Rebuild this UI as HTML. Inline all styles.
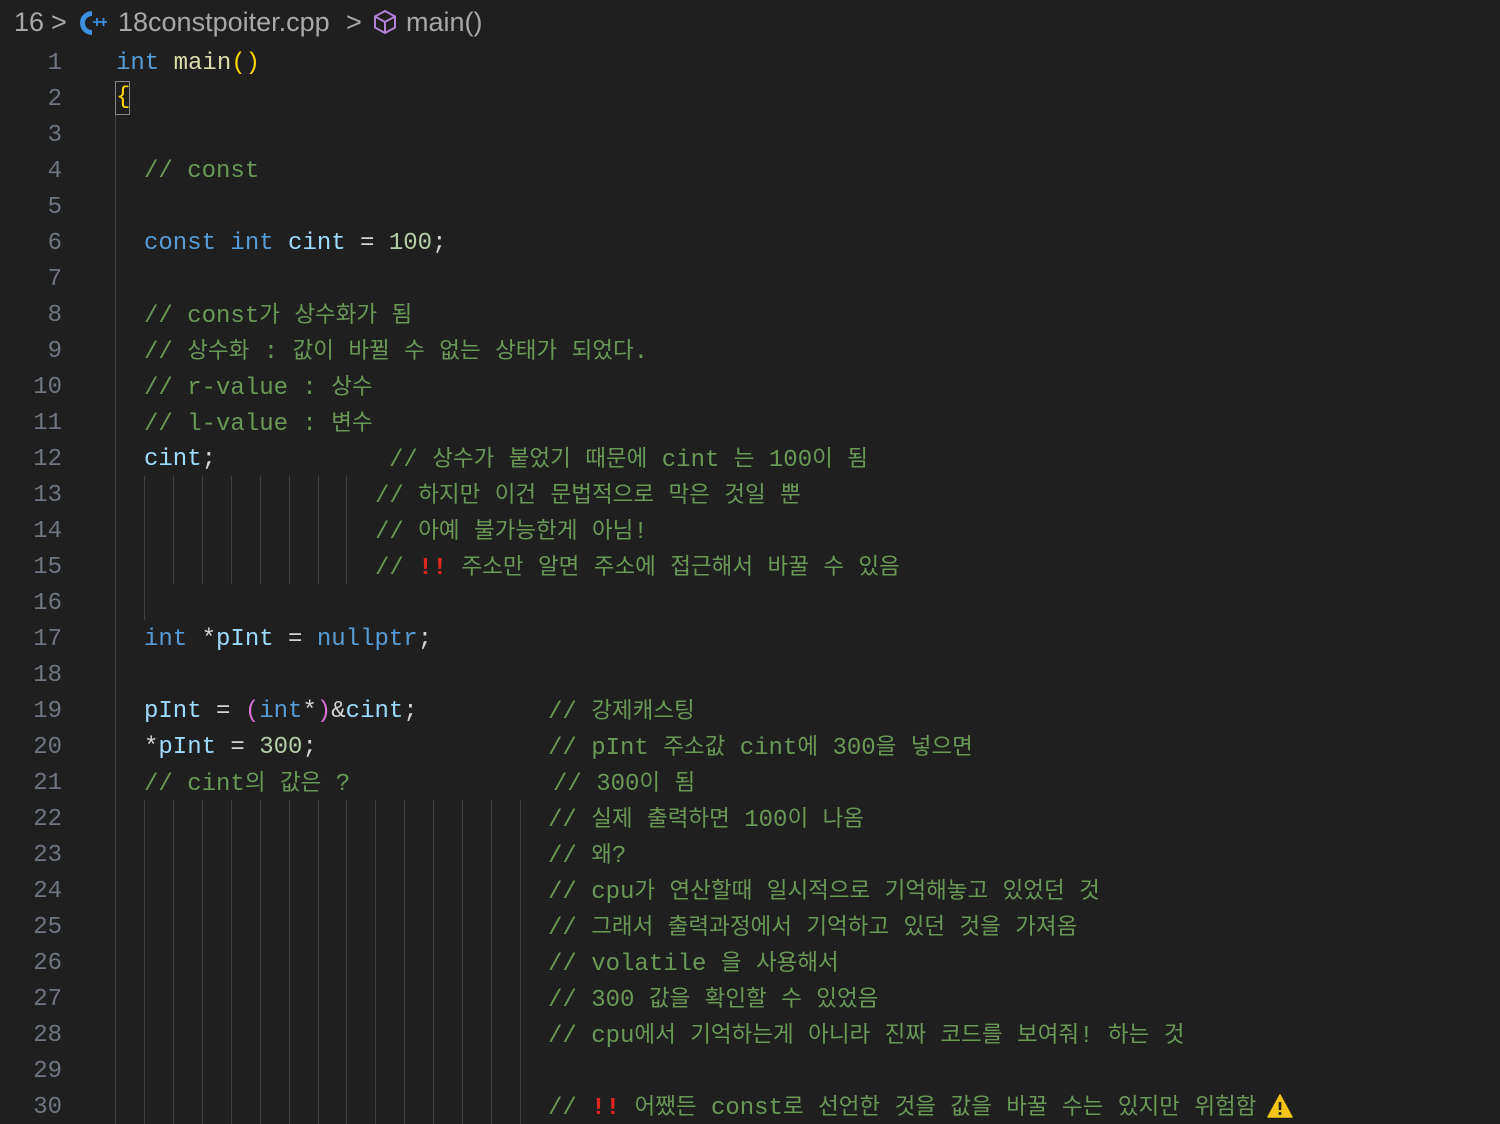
<!DOCTYPE html>
<html><head><meta charset="utf-8"><style>
html,body{margin:0;padding:0;background:#1f1f1f;width:1500px;height:1124px;overflow:hidden}
body{position:relative;font-family:"Liberation Mono","Noto Sans CJK KR",monospace;font-size:24px;color:#d4d4d4}
i{font-style:normal;font-size:22.5px}
.l{position:absolute;left:0;height:36px;line-height:36px;width:1500px;white-space:pre}
.n{position:absolute;right:1438px;color:#6e7681;text-align:right}
.s{position:absolute}
.c{color:#6a9955}.k{color:#569cd6}.f{color:#dcdcaa}.v{color:#9cdcfe}.m{color:#b5cea8}.y{color:#ffd700}.p{color:#da70d6}
.r{color:#e2261d;font-weight:bold}
.g{position:absolute;width:1px;background:#404040}
.bc{position:absolute;top:0;height:44px;line-height:44px;font-family:"Liberation Sans",sans-serif;font-size:27px;color:#a8a8a8;white-space:pre}
</style></head><body>
<div class="bc" style="left:14px">16</div>
<div class="bc" style="left:51px">&gt;</div>
<svg style="position:absolute;left:76px;top:9px" width="32" height="28" viewBox="0 0 32 28"><path d="M16 4.5 A9.5 9.5 0 1 0 16 23.5" fill="none" stroke="#3b8ee0" stroke-width="5"/><path d="M17 13h8M21 9v8M24 13h7M27.5 9v8" stroke="#3b8ee0" stroke-width="1.8"/></svg>
<div class="bc" style="left:118px">18constpoiter.cpp</div>
<div class="bc" style="left:346px">&gt;</div>
<svg style="position:absolute;left:372px;top:9px" width="26" height="26" viewBox="0 0 26 26" fill="none" stroke="#b180d7" stroke-width="2"><path d="M13 2L23 7.5V18.5L13 24L3 18.5V7.5Z M3 7.5L13 13L23 7.5 M13 13V24"/></svg>
<div class="bc" style="left:406px">main()</div>

<div class="g" style="left:115px;top:115px;height:1009px"></div>
<div class="g" style="left:144px;top:476px;height:144px"></div>
<div class="g" style="left:173px;top:476px;height:108px"></div><div class="g" style="left:202px;top:476px;height:108px"></div><div class="g" style="left:231px;top:476px;height:108px"></div><div class="g" style="left:260px;top:476px;height:108px"></div><div class="g" style="left:289px;top:476px;height:108px"></div><div class="g" style="left:318px;top:476px;height:108px"></div><div class="g" style="left:346px;top:476px;height:108px"></div>
<div class="g" style="left:144px;top:800px;height:324px"></div><div class="g" style="left:173px;top:800px;height:324px"></div><div class="g" style="left:202px;top:800px;height:324px"></div><div class="g" style="left:231px;top:800px;height:324px"></div><div class="g" style="left:260px;top:800px;height:324px"></div><div class="g" style="left:289px;top:800px;height:324px"></div><div class="g" style="left:318px;top:800px;height:324px"></div><div class="g" style="left:346px;top:800px;height:324px"></div><div class="g" style="left:375px;top:800px;height:324px"></div><div class="g" style="left:404px;top:800px;height:324px"></div><div class="g" style="left:433px;top:800px;height:324px"></div><div class="g" style="left:462px;top:800px;height:324px"></div><div class="g" style="left:491px;top:800px;height:324px"></div><div class="g" style="left:520px;top:800px;height:324px"></div>

<div class="l" style="top:46px"><span class="n">1</span><span class="s" style="left:116px"><span class="k">int</span> <span class="f">main</span><span class="y">()</span></span></div>
<div class="l" style="top:82px"><span class="n">2</span><span class="s y" style="left:115px;border:1px solid #888;height:32px;line-height:32px;top:-1px;width:13px">{</span></div>
<div class="l" style="top:118px"><span class="n">3</span></div>
<div class="l" style="top:154px"><span class="n">4</span><span class="s c" style="left:144px">// const</span></div>
<div class="l" style="top:190px"><span class="n">5</span></div>
<div class="l" style="top:226px"><span class="n">6</span><span class="s" style="left:144px"><span class="k">const</span> <span class="k">int</span> <span class="v">cint</span> = <span class="m">100</span>;</span></div>
<div class="l" style="top:262px"><span class="n">7</span></div>
<div class="l" style="top:298px"><span class="n">8</span><span class="s c" style="left:144px">// const<i>가</i> <i>상수화가</i> <i>됨</i></span></div>
<div class="l" style="top:334px"><span class="n">9</span><span class="s c" style="left:144px">// <i>상수화</i> : <i>값이</i> <i>바뀔</i> <i>수</i> <i>없는</i> <i>상태가</i> <i>되었다</i>.</span></div>
<div class="l" style="top:370px"><span class="n">10</span><span class="s c" style="left:144px">// r-value : <i>상수</i></span></div>
<div class="l" style="top:406px"><span class="n">11</span><span class="s c" style="left:144px">// l-value : <i>변수</i></span></div>
<div class="l" style="top:442px"><span class="n">12</span><span class="s v" style="left:144px">cint<span style="color:#d4d4d4">;</span></span><span class="s c" style="left:389px">// <i>상수가</i> <i>붙었기</i> <i>때문에</i> cint <i>는</i> 100<i>이</i> <i>됨</i></span></div>
<div class="l" style="top:478px"><span class="n">13</span><span class="s c" style="left:375px">// <i>하지만</i> <i>이건</i> <i>문법적으로</i> <i>막은</i> <i>것일</i> <i>뿐</i></span></div>
<div class="l" style="top:514px"><span class="n">14</span><span class="s c" style="left:375px">// <i>아예</i> <i>불가능한게</i> <i>아님</i>!</span></div>
<div class="l" style="top:550px"><span class="n">15</span><span class="s c" style="left:375px">// <span class="r">!!</span> <i>주소만</i> <i>알면</i> <i>주소에</i> <i>접근해서</i> <i>바꿀</i> <i>수</i> <i>있음</i></span></div>
<div class="l" style="top:586px"><span class="n">16</span></div>
<div class="l" style="top:622px"><span class="n">17</span><span class="s" style="left:144px"><span class="k">int</span> *<span class="v">pInt</span> = <span class="k">nullptr</span>;</span></div>
<div class="l" style="top:658px"><span class="n">18</span></div>
<div class="l" style="top:694px"><span class="n">19</span><span class="s" style="left:144px"><span class="v">pInt</span> = <span class="p">(</span><span class="k">int</span>*<span class="p">)</span>&amp;<span class="v">cint</span>;</span><span class="s c" style="left:548px">// <i>강제캐스팅</i></span></div>
<div class="l" style="top:730px"><span class="n">20</span><span class="s" style="left:144px">*<span class="v">pInt</span> = <span class="m">300</span>;</span><span class="s c" style="left:548px">// pInt <i>주소값</i> cint<i>에</i> 300<i>을</i> <i>넣으면</i></span></div>
<div class="l" style="top:766px"><span class="n">21</span><span class="s c" style="left:144px">// cint<i>의</i> <i>값은</i> ?</span><span class="s c" style="left:553px">// 300<i>이</i> <i>됨</i></span></div>
<div class="l" style="top:802px"><span class="n">22</span><span class="s c" style="left:548px">// <i>실제</i> <i>출력하면</i> 100<i>이</i> <i>나옴</i></span></div>
<div class="l" style="top:838px"><span class="n">23</span><span class="s c" style="left:548px">// <i>왜</i>?</span></div>
<div class="l" style="top:874px"><span class="n">24</span><span class="s c" style="left:548px">// cpu<i>가</i> <i>연산할때</i> <i>일시적으로</i> <i>기억해놓고</i> <i>있었던</i> <i>것</i></span></div>
<div class="l" style="top:910px"><span class="n">25</span><span class="s c" style="left:548px">// <i>그래서</i> <i>출력과정에서</i> <i>기억하고</i> <i>있던</i> <i>것을</i> <i>가져옴</i></span></div>
<div class="l" style="top:946px"><span class="n">26</span><span class="s c" style="left:548px">// volatile <i>을</i> <i>사용해서</i></span></div>
<div class="l" style="top:982px"><span class="n">27</span><span class="s c" style="left:548px">// 300 <i>값을</i> <i>확인할</i> <i>수</i> <i>있었음</i></span></div>
<div class="l" style="top:1018px"><span class="n">28</span><span class="s c" style="left:548px">// cpu<i>에서</i> <i>기억하는게</i> <i>아니라</i> <i>진짜</i> <i>코드를</i> <i>보여줘</i>! <i>하는</i> <i>것</i></span></div>
<div class="l" style="top:1054px"><span class="n">29</span></div>
<div class="l" style="top:1090px"><span class="n">30</span><span class="s c" style="left:548px">// <span class="r">!!</span> <i>어쨌든</i> const<i>로</i> <i>선언한</i> <i>것을</i> <i>값을</i> <i>바꿀</i> <i>수는</i> <i>있지만</i> <i>위험함</i></span></div>
<svg style="position:absolute;left:1267px;top:1094px" width="26" height="24" viewBox="0 0 26 24"><path d="M13 1L25 23H1Z" fill="#f5c518" stroke="#f5c518" stroke-linejoin="round" stroke-width="1.5"/><path d="M13 8v8" stroke="#222" stroke-width="2.6"/><circle cx="13" cy="19.5" r="1.5" fill="#222"/></svg>
</body></html>
